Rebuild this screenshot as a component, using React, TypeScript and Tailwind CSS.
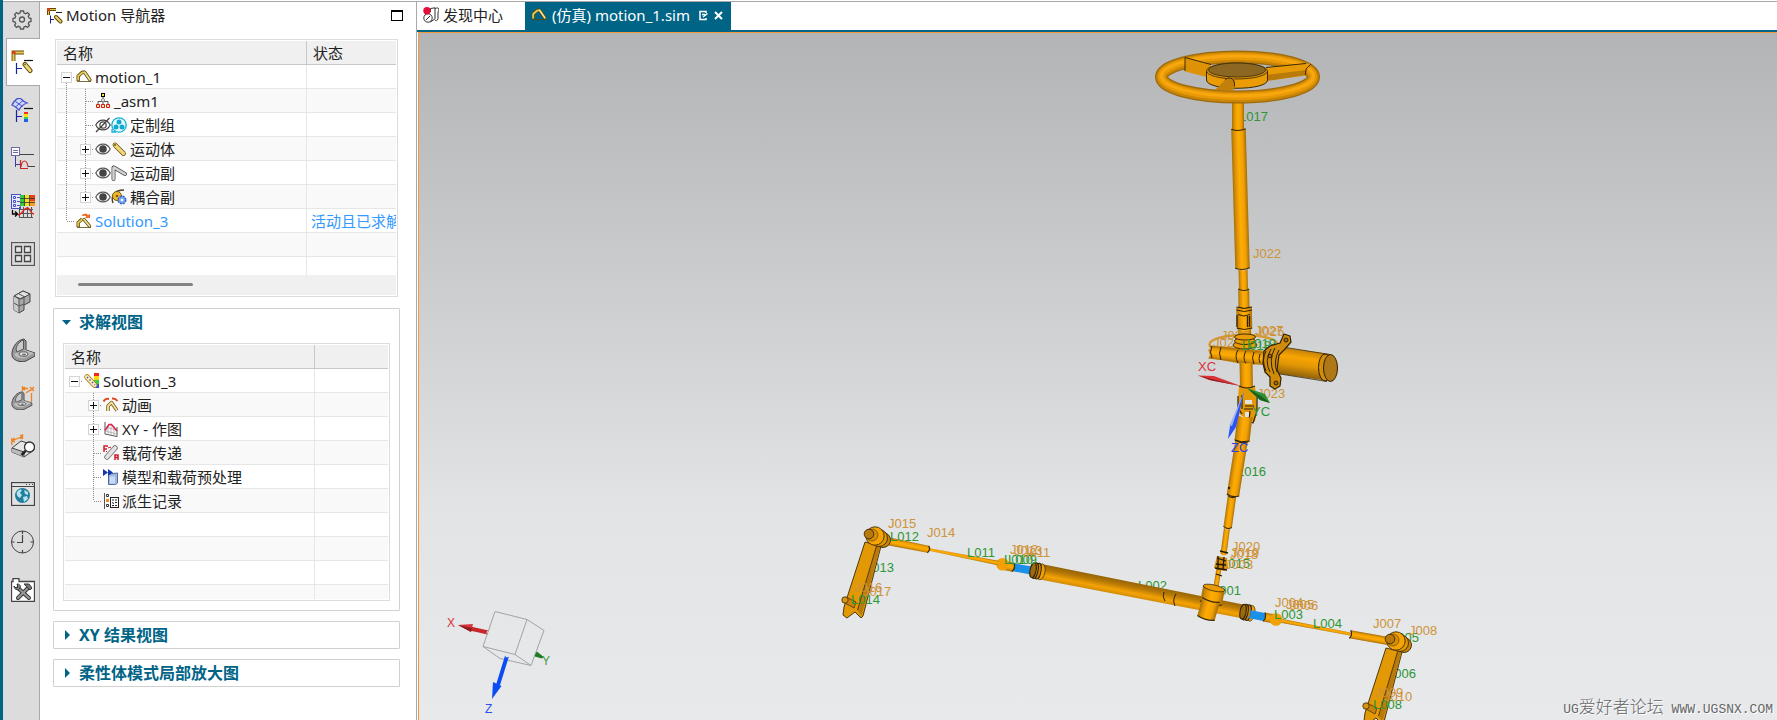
import React, { useState } from 'react';

type Line = 'none' | 'up' | 'down' | 'full';

interface TreeRow {
    name: string;
    lines: Line[];
    box?: '+' | '-';
    icons: React.ReactNode[];
    status?: string;
    active?: boolean;
}

interface TubeProps {
    from: [number, number];
    to: [number, number];
    w: number;
    w2?: number;
    fill?: string;
    caps?: boolean;
}

const Svg: React.FC<{ size?: number; children: React.ReactNode }> = ({ size = 16, children }) => (
    <svg width={size} height={size} viewBox={`0 0 ${size} ${size}`} fill="none" className="block shrink-0" aria-hidden="true">
        {children}
    </svg>
);

/* ---------- small icons, 16px ---------- */

const LinkageIcon = () => (
    <Svg>
        <path d="M1 12.500h14" stroke="#5c4a08" strokeWidth=".8" />
        <path d="M2.200 12V7L6 3.500l3-.5" stroke="#5c4a08" strokeWidth="3.400" strokeLinejoin="round" />
        <path d="M8.800 3.500l5 7.300" stroke="#5c4a08" strokeWidth="3.400" strokeLinecap="round" />
        <path d="M2.200 11.500V7L6 3.700l3-.5" stroke="#e4c95a" strokeWidth="1.800" strokeLinejoin="round" />
        <path d="M8.800 3.500l5 7.300" stroke="#f3e292" strokeWidth="1.800" strokeLinecap="round" />
    </Svg>
);

const SolutionIcon = () => (
    <Svg>
        <path d="M1 14.500h14" stroke="#5c4a08" strokeWidth=".8" />
        <path d="M2.200 14V9.500l4-3.500" stroke="#5c4a08" strokeWidth="3.400" strokeLinejoin="round" />
        <path d="M8 6.500l5.500 6.500" stroke="#5c4a08" strokeWidth="3.400" strokeLinecap="round" />
        <path d="M2.200 13.500V9.500l4-3.300" stroke="#e4c95a" strokeWidth="1.800" strokeLinejoin="round" />
        <path d="M8 6.500l5.500 6.500" stroke="#f3e292" strokeWidth="1.800" strokeLinecap="round" />
        <path d="M6 2c3-2 5-1 6 0l2-1v4H9l1.500-1.500C9 2.500 8 2.500 6 3z" fill="#f26a21" />
    </Svg>
);

const AssemblyIcon = () => (
    <Svg>
        <path d="M8 4v7M3 11V8.500h10V11" stroke="#555" />
        <rect x="6.500" y=".5" width="3" height="3" fill="#ffe94a" stroke="#000" />
        <circle cx="8" cy="7" r="1.500" fill="#fff" stroke="#888" />
        <path d="M1.500 11.500h3v3h-3zM6.500 11.500h3v3h-3zM11.500 11.500h3v3h-3z" fill="#ffe9a0" stroke="#d01818" />
    </Svg>
);

const EyeIcon = () => (
    <Svg>
        <path d="M.8 8C4 1.500 12 1.500 15.200 8 12 14.500 4 14.500.8 8z" fill="#fff" stroke="#555" strokeWidth="1.200" />
        <circle cx="8" cy="8" r="3.800" fill="#444" />
    </Svg>
);

const HiddenEyeIcon = () => (
    <Svg>
        <path d="M.8 8C4 1.500 12 1.500 15.200 8 12 14.500 4 14.500.8 8z" stroke="#444" strokeWidth="1.200" />
        <circle cx="8" cy="8" r="3.200" stroke="#444" strokeWidth="1.200" />
        <path d="M1 15L14.500 1" stroke="#444" strokeWidth="1.300" />
    </Svg>
);

const GroupIcon = () => (
    <Svg>
        <circle cx="8" cy="8" r="7.200" fill="#eafafd" stroke="#12b0d4" strokeWidth="1.300" />
        <circle cx="8" cy="5" r="2.500" fill="#12a9cf" />
        <circle cx="5" cy="10" r="2.500" fill="#12a9cf" />
        <circle cx="11" cy="10" r="2.500" fill="#12a9cf" />
        <path d="M1 12v3h4" stroke="#12b0d4" strokeWidth="1.300" />
    </Svg>
);

const BodyIcon = () => (
    <Svg>
        <path d="M4 4l8.500 8.500" stroke="#6d5610" strokeWidth="4.800" strokeLinecap="round" />
        <path d="M4 4l8.500 8.500" stroke="#f0d878" strokeWidth="3.200" strokeLinecap="round" />
        <circle cx="4" cy="4" r="1" fill="#6d5610" />
    </Svg>
);

const JointIcon = () => (
    <Svg>
        <path d="M2.500 2.500V14M3 2.500l11 6.500" stroke="#555" strokeWidth="4" strokeLinecap="round" />
        <path d="M2.500 3V14M3 2.500l11 6.500" stroke="#d6d6d6" strokeWidth="2.400" strokeLinecap="round" />
    </Svg>
);

const CouplerIcon = () => (
    <Svg>
        <path d="M2 14C-.5 7 3 1 13 1" stroke="#4b4020" strokeWidth="1.400" />
        <circle cx="6" cy="7" r="4.500" fill="#f0b92d" stroke="#7a5a0c" />
        <circle cx="6" cy="7" r="1.300" fill="#7a5a0c" />
        <circle cx="11" cy="11" r="3.800" fill="#7ba7ee" stroke="#2c5fc0" strokeWidth="1.400" strokeDasharray="2 1" />
        <circle cx="11" cy="11" r="1.300" fill="#fff" />
    </Svg>
);

const ResultIcon = () => (
    <Svg>
        <path d="M10 0h5v4h-5z" fill="#f3241c" />
        <path d="M10 3h5v4h-5z" fill="#ffd500" />
        <path d="M10 7h5v4h-5z" fill="#35d04a" />
        <path d="M10 11h5v4h-5z" fill="#2454f0" />
        <path d="M3 4l7.500 8" stroke="#b5841e" strokeWidth="5.500" strokeLinecap="round" />
        <path d="M3 4l7.500 8" stroke="#fdf0c0" strokeWidth="4" strokeLinecap="round" />
        <path d="M3 4l8 8" stroke="#3c49c8" strokeWidth="1.500" strokeDasharray="1.500 2" />
    </Svg>
);

const AnimationIcon = () => (
    <Svg>
        <path d="M5 14V9l3.500-3.500 5.500 8" stroke="#75591a" strokeWidth="3.400" strokeLinejoin="round" />
        <path d="M5 14V9l3.500-3.500 5.500 8" stroke="#f6e19a" strokeWidth="1.800" strokeLinejoin="round" />
        <path d="M.5 4.500C2 1.500 4 1.500 6 2M9 1.500c3-.5 4 .5 5.500 2.500" stroke="#e04b1c" strokeWidth="2" />
    </Svg>
);

const GraphIcon = () => (
    <Svg>
        <path d="M2 1v12l12 2.500V6" stroke="#555" />
        <path d="M5 4v9.500M8 3v11M11 5v9.500M2 6l12 3M2 10l12 3" stroke="#aaa" strokeWidth=".8" />
        <path d="M2 9.500l4-6h2.500L14 10" stroke="#e0204a" strokeWidth="1.600" />
    </Svg>
);

const LoadIcon = () => (
    <Svg>
        <path d="M4 12L12 3" stroke="#777" strokeWidth="5.500" strokeLinecap="round" />
        <path d="M4 12L12 3" stroke="#e2e2e2" strokeWidth="3.800" strokeLinecap="round" />
        <path d="M1 7V1h4M1 4h3M12 15V10h3v5M12 12.500h3" stroke="#d01c2c" strokeWidth="1.500" />
        <path d="M5 3l3-1M3 6l1 1" stroke="#d01c2c" />
    </Svg>
);

const PreprocessIcon = () => (
    <Svg>
        <path d="M5.500 5l9-1v10l-2 1.500h-7z" fill="#9db9e4" stroke="#506b98" />
        <path d="M7 7.500h5v7H7z" fill="#c8daf5" />
        <path d="M0 0l5 3.500L0 7zM5 0l5 3.500L5 7z" fill="#1438a8" />
    </Svg>
);

const RecordIcon = () => (
    <Svg>
        <path d="M1.500 0v16" stroke="#555" />
        <path d="M3.500 1.500h2v2h-2zM3.500 11.500h2v2h-2z" stroke="#333" />
        <path d="M3 6h3v3H3z" fill="#f08a24" />
        <rect x="7.500" y="4.500" width="8" height="10" fill="#fff" stroke="#222" />
        <path d="M9 7h2M12 7h2M9 9.500l2 1M12 9.500h2M9 12.500h2M12 12.500h2" stroke="#222" />
    </Svg>
);

const NavigatorIcon = () => (
    <Svg>
        <path d="M1.500 7V1.500H9" stroke="#5c4a08" strokeWidth="3" />
        <path d="M1.500 7V1.500H9" stroke="#e9bf3b" />
        <path d="M0 0h3v3H0z" fill="#d2401a" />
        <path d="M3.500 7.500v8M4 11.500h3" stroke="#1a22a0" />
        <path d="M9 4.500h6" stroke="#222" />
        <path d="M9 9l4.500 4.500" stroke="#5c4a08" strokeWidth="4" strokeLinecap="round" />
        <path d="M9 9l4.500 4.500" stroke="#ecd069" strokeWidth="2" strokeLinecap="round" />
    </Svg>
);

const DiscoveryIcon = () => (
    <Svg>
        <path d="M7.500 5V1.500L12 .8v11L7.500 15M12 1.500c5-2 4 2 3 3.500v7c-1 2-2 2-3 1" stroke="#333" />
        <circle cx="5" cy="11" r="4.200" fill="#fff" stroke="#333" />
        <path d="M3 13l4-4" stroke="#333" />
        <circle cx="4" cy="3.800" r="3.700" fill="#e2103c" />
    </Svg>
);

/* ---------- resource bar icons, 24px ---------- */

const GearIcon = () => (
    <Svg size={24}>
        <path
            d="M9.500 4h3l.5 2 1.700.7 1.800-1.100 1.900 1.900-1.100 1.800.7 1.700 2 .5v3l-2 .5-.7 1.700 1.100 1.800-1.900 1.900-1.800-1.100-1.700.7-.5 2h-3l-.5-2-1.700-.7-1.800 1.100-1.900-1.900 1.100-1.800-.7-1.700-2-.5v-3l2-.5.7-1.700-1.100-1.800 1.900-1.900 1.800 1.100L9 6z"
            stroke="#555"
            strokeWidth="1.300"
        />
        <circle cx="11" cy="12.500" r="2.500" stroke="#555" strokeWidth="1.300" />
    </Svg>
);

const MotionNavIcon = () => (
    <Svg size={24}>
        <path d="M2.500 11V2.500H13" stroke="#5c4a08" strokeWidth="3.800" />
        <path d="M2.500 11V2.500H13" stroke="#ecc655" strokeWidth="2" />
        <path d="M1 1h3.500v3H1z" fill="#d2401a" />
        <path d="M5.500 13v11M6 18.500h5" stroke="#1a22a0" strokeWidth="1.200" />
        <path d="M13 10.500h9" stroke="#111" strokeWidth="1.200" />
        <path d="M14 14.500l5 6" stroke="#5c4a08" strokeWidth="5" strokeLinecap="round" />
        <path d="M14 14.500l5 6" stroke="#efd67b" strokeWidth="3" strokeLinecap="round" />
        <circle cx="14" cy="14.500" r=".8" fill="#5c4a08" />
    </Svg>
);

const SimNavIcon = () => (
    <Svg size={24}>
        <path d="M1 7C3 3 6 0 9 0c2 2 4 4 7 5-3 1-6 3-8 7-2-2-4-4-7-5z" fill="#cfd6ff" stroke="#4850c8" strokeWidth="1.300" />
        <path d="M4.500 3.500l7 5M12 2.500L4.500 9" stroke="#4850c8" />
        <path d="M5.500 12v12M6 18.500h5" stroke="#1a22a0" strokeWidth="1.200" />
        <path d="M13 10.500h9" stroke="#111" strokeWidth="1.200" />
        <path d="M13 14h4v3h-4z" fill="#f0301c" />
        <path d="M13 16h4v3h-4z" fill="#ffe000" />
        <path d="M13 19h4v2h-4z" fill="#30d050" />
        <path d="M13 21h4v3h-4z" fill="#2060f0" />
    </Svg>
);

const XyNavIcon = () => (
    <Svg size={24}>
        <rect x=".5" y="1.500" width="8" height="8" fill="#fff" stroke="#6a6aa8" />
        <path d="M2 4.500h5M2 6.500h5" stroke="#6a6aa8" />
        <path d="M9 8.500h14M17 20.500h7" stroke="#444" />
        <path d="M4.500 10v11M5 18.500h4" stroke="#3a3aa8" />
        <path d="M9.500 14v8.500H17M10 21c1-8 6-8 7 0" stroke="#c82828" strokeWidth="1.200" />
    </Svg>
);

const ResultNavIcon = () => (
    <Svg size={24}>
        <rect x=".5" y=".5" width="9" height="14" fill="#e8e8ff" stroke="#4850c8" />
        <path d="M2.500 2.500h2v2h-2zM2.500 6.500h2v2h-2zM2.500 10.500h2v2h-2zM6 3.500h3M6 7.500h3M6 11.500h3" stroke="#4850c8" />
        <path d="M9 1h5v11H9z" fill="#38c840" />
        <path d="M14 1h5v11h-5z" fill="#f4e020" />
        <path d="M19 1h5v6h-5z" fill="#e8401c" />
        <path d="M19 7h5v5h-5z" fill="#f5a020" />
        <path d="M9 4.500h15M9 8.500h15M13.500 1v11M18.500 1v11" stroke="#333" strokeWidth=".8" />
        <path d="M8.500 13v11M12.500 13v11M16.500 13v11M20.500 13v11M8 15.500h14M8 19.500h14M8 23.500h14" stroke="#555" />
        <path d="M7 21c5 0 5-7 9-7s3 6 7 6" stroke="#e02020" strokeWidth="1.300" />
        <path d="M1.500 16v4H6M4 17.500L6.500 20 4 22.500" stroke="#000" strokeWidth="1.300" />
    </Svg>
);

const GridIcon = () => (
    <Svg size={24}>
        <rect x=".5" y=".5" width="23" height="23" stroke="#555" strokeWidth="1.300" />
        <path d="M4.500 4.500h6v6h-6zM13.500 4.500h6v6h-6zM4.500 13.500h6v6h-6zM13.500 13.500h6v6h-6z" fill="#e8e8e8" stroke="#444" strokeWidth="1.300" />
    </Svg>
);

const BlocksIcon = () => (
    <Svg size={24}>
        <path d="M3 6l9-5 7 3v8l-6 3v5l-5 3-5-3z" fill="#a8a8a8" stroke="#444" strokeLinejoin="round" />
        <path d="M3 6l9-5 7 3-9 5z" fill="#e2e2e2" stroke="#444" strokeLinejoin="round" />
        <path d="M3 6l5 3v14l-5-3z" fill="#c8c8c8" />
        <path d="M3 6l5 3v14M8 9l5-2v8M3 13l5 3 5-2M8 4l6 3" stroke="#555" />
    </Svg>
);

const BracketShape = () => (
    <>
        <path d="M1 15C2 7 7 2 13 1l2 2v9l9 3v3l-9 5c-6 2-14-1-14-6z" fill="#999" stroke="#444" strokeLinejoin="round" />
        <path d="M5 11c1-5 4-8 7.500-9v9L6 14z" fill="#c9c9c9" stroke="#555" />
        <path d="M3 16l11-4 9 3-9 5c-5 1-9 0-11-4z" fill="#bdbdbd" />
        <ellipse cx="12.500" cy="16" rx="4.500" ry="2.200" fill="#ddd" stroke="#555" />
        <ellipse cx="13" cy="16.500" rx="2" ry="1" fill="#777" />
    </>
);

const PartIcon = () => (
    <Svg size={24}>
        <BracketShape />
    </Svg>
);

const PmiIcon = () => (
    <Svg size={24}>
        <g transform="translate(0 5) scale(.87 .8)">
            <BracketShape />
        </g>
        <path d="M11.500 0v5M11 2.500h6M14 1l-2.500 1.500L14 4M15 7l4-3M19 1l4 4M23 1l-4 4M20.500 7v9" stroke="#f08020" strokeWidth="1.300" />
    </Svg>
);

const InspectIcon = () => (
    <Svg size={24}>
        <path d="M1 14l9-7 13 4v5l-10 7-12-5z" fill="#e6e6e6" stroke="#444" strokeLinejoin="round" />
        <path d="M1 14l12 4v5l-12-5z" fill="#bbb" />
        <path d="M1 14l12 4 10-7M13 18v5" stroke="#444" />
        <circle cx="18.500" cy="13" r="5" fill="#fff" stroke="#333" strokeWidth="1.300" />
        <path d="M14.500 17l-4 4" stroke="#222" strokeWidth="2.500" />
        <path d="M.8 4v7M11.500 0v5M1 7l10-4.500M3.500 4L1 7l3 .8M9 1l2.500 1.500L9.500 5" stroke="#f08020" strokeWidth="1.300" />
    </Svg>
);

const WebIcon = () => (
    <Svg size={24}>
        <rect x=".5" y=".5" width="23" height="23" fill="#e2e2e2" stroke="#444" strokeWidth="1.300" />
        <path d="M1 4.500h22" stroke="#444" />
        <path d="M15 2.500h7" stroke="#444" strokeDasharray="1 2" />
        <circle cx="11.500" cy="13.500" r="7.500" fill="#1f7f9c" />
        <path d="M6 10c2-3 4-3 5-2l-2 3 2 2-2 3c-2-1-4-3-3-6zM13 8l4 2v3l-3-1zM12 15l4-1 1 3-4 3z" fill="#b8e2ee" />
    </Svg>
);

const ClockIcon = () => (
    <Svg size={24}>
        <circle cx="11.500" cy="12" r="11" stroke="#444" />
        <path d="M11.500 1v3M11.500 20v3M.500 12h3M19.500 12h3M11.500 5v7.500H6" stroke="#444" strokeWidth="1.200" />
    </Svg>
);

const ToolsIcon = () => (
    <Svg size={24}>
        <path d="M.5 3.500H2v-3h6v3h15.500v20H.5z" fill="#fff" stroke="#444" strokeWidth="1.300" />
        <path d="M7 10l11 10M17 10L7 20" stroke="#333" strokeWidth="4" strokeLinecap="round" />
        <path d="M7 10l11 10M17 10L7 20" stroke="#999" strokeWidth="2" strokeLinecap="round" />
        <path d="M3 8c0 4 5 5 6 2s-1-4-3-4l1 3-2 1z" fill="#888" stroke="#333" />
        <path d="M13 6h5l3 4-2 2-3-3z" fill="#777" stroke="#333" />
    </Svg>
);

/* ---------- tree tables ---------- */

const motionRows: TreeRow[] = [
    { name: 'motion_1', lines: ['down'], box: '-', icons: [<LinkageIcon />] },
    { name: '_asm1', lines: ['full', 'full'], icons: [<AssemblyIcon />] },
    { name: '定制组', lines: ['full', 'full'], icons: [<HiddenEyeIcon />, <GroupIcon />] },
    { name: '运动体', lines: ['full', 'full'], box: '+', icons: [<EyeIcon />, <BodyIcon />] },
    { name: '运动副', lines: ['full', 'full'], box: '+', icons: [<EyeIcon />, <JointIcon />] },
    { name: '耦合副', lines: ['full', 'up'], box: '+', icons: [<EyeIcon />, <CouplerIcon />] },
    { name: 'Solution_3', lines: ['up'], icons: [<SolutionIcon />], status: '活动且已求解', active: true },
];

const solutionRows: TreeRow[] = [
    { name: 'Solution_3', lines: ['none'], box: '-', icons: [<ResultIcon />] },
    { name: '动画', lines: ['none', 'full'], box: '+', icons: [<AnimationIcon />] },
    { name: 'XY - 作图', lines: ['none', 'full'], box: '+', icons: [<GraphIcon />] },
    { name: '载荷传递', lines: ['none', 'full'], icons: [<LoadIcon />] },
    { name: '模型和载荷预处理', lines: ['none', 'full'], icons: [<PreprocessIcon />] },
    { name: '派生记录', lines: ['none', 'up'], icons: [<RecordIcon />] },
];

const Guide: React.FC<{ line: Line; last: boolean; box?: '+' | '-'; label: string }> = ({ line, last, box, label }) => {
    const y1 = line === 'down' ? 12 : 0;
    const y2 = line === 'up' ? 12 : 24;
    return (
        <span className={`relative h-6 shrink-0 ${last ? 'w-[15px]' : 'w-[19px]'}`}>
            <svg width="19" height="24" className="block" stroke="#8a8a8a" strokeDasharray="1 1" aria-hidden="true">
                {line !== 'none' && <path d={`M5.500 ${y1}V${y2}`} />}
                {last && <path d="M6 12.500H14" />}
            </svg>
            {last && box && (
                <button type="button" aria-label={label} className="absolute left-0 top-[7px] block h-[11px] w-[11px] border border-[#d4d4d4] bg-white">
                    <svg width="9" height="9" className="block" stroke="#111" aria-hidden="true">
                        <path d={box === '+' ? 'M1 4.500h7M4.500 1v7' : 'M1 4.500h7'} />
                    </svg>
                </button>
            )}
        </span>
    );
};

const TreeTable: React.FC<{ rows: TreeRow[]; blanks: number; tail: string; status: string; label: string }> = ({ rows, blanks, tail, status, label }) => {
    const cell = 'overflow-hidden whitespace-nowrap border-[#e6e6e6]';
    return (
        <table aria-label={label} className="w-full table-fixed border-separate border-spacing-0 text-[15px] leading-[21px] text-[#222]">
            <thead>
                <tr className="h-6 bg-[#f0f0f0] text-left">
                    <th className="h-6 w-[250px] border-b border-r border-[#c8c8c8] p-0 pl-1.5 pt-0.5 font-normal">名称</th>
                    <th className="h-6 border-b border-[#c8c8c8] p-0 pl-1.5 pt-0.5 font-normal">{status}</th>
                </tr>
            </thead>
            <tbody>
                {rows.map((row) => (
                    <tr key={row.name} className={`h-6 even:bg-[#f9f9f9] ${row.active ? 'text-[#3399ff]' : ''}`}>
                        <td className={`${cell} border-b border-r p-0`}>
                            <div className="flex h-[23px] items-center overflow-hidden pl-1">
                                {row.lines.map((line, i) => (
                                    <Guide key={i} line={line} last={i === row.lines.length - 1} box={row.box} label={row.name} />
                                ))}
                                {row.icons.map((icon, i) => (
                                    <React.Fragment key={i}>{icon}</React.Fragment>
                                ))}
                                <span className="ml-[3px] pt-0.5">{row.name}</span>
                            </div>
                        </td>
                        <td className={`${cell} border-b p-0 pl-1 pt-0.5`}>{row.status}</td>
                    </tr>
                ))}
                {Array.from({ length: blanks }, (_, i) => (
                    <tr key={i} className="h-6 even:bg-[#f9f9f9]">
                        <td className={`${cell} border-b border-r p-0`} />
                        <td className={`${cell} border-b p-0`} />
                    </tr>
                ))}
                <tr className={`even:bg-[#f9f9f9] ${tail}`}>
                    <td className={`${cell} border-r p-0`} />
                    <td className={`${cell} p-0`} />
                </tr>
            </tbody>
        </table>
    );
};

const Section: React.FC<{ title: string; defaultOpen?: boolean; children?: React.ReactNode }> = ({ title, defaultOpen = false, children }) => {
    const [open, setOpen] = useState(defaultOpen);
    const expanded = open && !!children;
    return (
        <section className="rounded-[1px] border border-[#d0d0d0]">
            <h2>
                <button
                    type="button"
                    aria-expanded={expanded}
                    onClick={() => setOpen(!open)}
                    className={`flex w-full items-center gap-2 pl-2 text-base leading-[26px] font-bold text-[#006487] ${expanded ? 'pb-2' : ''}`}
                >
                    <svg width="9" height="10" fill="#006487" aria-hidden="true">
                        <path d={expanded ? 'M0 3h9L4.500 8z' : 'M3 0v10l5-5z'} />
                    </svg>
                    {title}
                </button>
            </h2>
            {expanded && <div className="px-[9px] pb-[9px]">{children}</div>}
        </section>
    );
};

/* ---------- 3D view ---------- */

const Tube: React.FC<TubeProps> = ({ from, to, w, w2 = w, fill = 'url(#metal)', caps = false }) => {
    const dx = to[0] - from[0];
    const dy = to[1] - from[1];
    const len = Math.hypot(dx, dy);
    const angle = (Math.atan2(dy, dx) * 180) / Math.PI;
    return (
        <g transform={`translate(${from[0]} ${from[1]}) rotate(${angle})`}>
            <path d={`M0 ${-w / 2}L${len} ${-w2 / 2}Q${len + 3} 0 ${len} ${w2 / 2}L0 ${w / 2}Q3 0 0 ${-w / 2}z`} fill={fill} />
            {caps && (
                <path
                    d={`M0 ${-w / 2}Q3 0 0 ${w / 2}M${len} ${-w2 / 2}Q${len + 3} 0 ${len} ${w2 / 2}`}
                    fill="none"
                    stroke="#3b2a08"
                    strokeWidth="1.200"
                />
            )}
        </g>
    );
};

const Labels: React.FC<{ items: [string, number, number][]; color: string }> = ({ items, color }) => (
    <g fill={color} fontSize="13" fontFamily='"Liberation Sans", Arial, sans-serif'>
        {items.map(([text, x, y]) => (
            <text key={text} x={x} y={y}>{text}</text>
        ))}
    </g>
);

const Knuckle: React.FC<{ x: number; y: number }> = ({ x, y }) => (
    <g stroke="#3b2a08" strokeWidth=".9">
        <circle cx={x + 8} cy={y + 4} r="7.500" fill="#c98407" />
        <circle cx={x + 4} cy={y + 2} r="8.500" fill="#e39806" />
        <circle cx={x} cy={y} r="9.200" fill="#f5a404" />
        <circle cx={x - 3} cy={y - 1} r="6" fill="#d68d06" strokeWidth=".5" />
        <circle cx={x - 6} cy={y - 2} r="4.800" fill="#b97908" />
    </g>
);

const Arm: React.FC<{ x: number; y: number }> = ({ x, y }) => (
    <g transform={`translate(${x} ${y})`} strokeLinejoin="round">
        <path d="M-10 7L6 11-12 81l-2 2-6-6-8 6-4-3 1-8z" fill="#e39806" stroke="#3b2a08" strokeWidth=".9" />
        <path d="M5.500 11.500l-4-1-19 65 4 5z" fill="#b97c0c" />
        <path d="M1.500 11l-19 64" stroke="#3b2a08" strokeWidth=".8" />
        <path d="M-29 62l10 5-2 6-11-6z" fill="#c98407" stroke="#3b2a08" strokeWidth=".7" />
        <circle cx="-30" cy="65" r="3.200" fill="#d9930c" stroke="#3b2a08" strokeWidth=".8" />
    </g>
);

const Boot: React.FC<{ x: number; y: number }> = ({ x, y }) => (
    <g transform={`translate(${x} ${y}) rotate(11)`} stroke="#2e2106">
        <ellipse cx="4" rx="4" ry="8" fill="#f0a006" strokeWidth=".6" />
        <ellipse cx="1" rx="3" ry="8" fill="#c98407" />
        <ellipse cx="-2" rx="3" ry="8" fill="#c98407" />
        <ellipse cx="-4" rx="3" ry="7.500" fill="#9b6a0e" />
    </g>
);

const Viewport = () => (
    <svg viewBox="419 33 1358 687" preserveAspectRatio="xMidYMid slice" className="absolute inset-0 block h-full w-full" role="img" aria-label="motion_1.sim">
        <defs>
            <linearGradient id="metal" x1="0" y1="0" x2="0" y2="1">
                <stop offset="0" stopColor="#a56d06" />
                <stop offset=".25" stopColor="#f0a004" />
                <stop offset=".55" stopColor="#ffac02" />
                <stop offset=".8" stopColor="#dc9206" />
                <stop offset="1" stopColor="#a87008" />
            </linearGradient>
            <linearGradient id="rack" x1="0" y1="0" x2="0" y2="1">
                <stop offset="0" stopColor="#946206" />
                <stop offset=".35" stopColor="#b97a06" />
                <stop offset=".7" stopColor="#f5a303" />
                <stop offset="1" stopColor="#ce8a08" />
            </linearGradient>
            <linearGradient id="motor" x1="0" y1="0" x2="0" y2="1">
                <stop offset="0" stopColor="#c58207" />
                <stop offset=".3" stopColor="#f8a503" />
                <stop offset=".6" stopColor="#df9505" />
                <stop offset="1" stopColor="#8f610c" />
            </linearGradient>
        </defs>

        {/* labels behind the parts */}
        <Labels
            color="#2e9636"
            items={[
                ['L017', 1239, 121],
                ['L016', 1237, 476],
                ['L002', 1138, 590],
                ['L015', 1221, 568],
                ['L001', 1212, 595],
                ['L013', 865, 572],
                ['L005', 1390, 642],
                ['L006', 1387, 678],
            ]}
        />
        <Labels color="#cf9338" items={[['J023', 1257, 398], ['J027', 1255, 335], ['J025', 1256, 336]]} />

        {/* steering wheel */}
        <Tube from={[1238, 100]} to={[1238, 130]} w={12} caps />
        <ellipse cx="1237.500" cy="77" rx="76" ry="20" fill="none" stroke="#9c690c" strokeWidth="13" />
        <ellipse cx="1237.500" cy="77" rx="76" ry="20" fill="none" stroke="#c98507" strokeWidth="10.500" />
        <ellipse cx="1237.500" cy="76.500" rx="76" ry="20" fill="none" stroke="#e89a06" strokeWidth="7" />
        <ellipse cx="1237.500" cy="76" rx="76" ry="20" fill="none" stroke="#f8a70e" strokeWidth="3" />
        <path d="M1185 57.500l26 7-2 13-24-6z" fill="#dd9305" />
        <path d="M1185 71V57.500l26 7" fill="none" stroke="#3b2a08" />
        <path d="M1266 67.500l44-4-4 12-40 5.500z" fill="#e89a05" />
        <path d="M1266 75l41-5-1 5-40 6z" fill="#b87a08" />
        <path d="M1266 67.500l40-4M1311 64l-5 5-.5 6" fill="none" stroke="#3b2a08" />
        <path d="M1206.500 71v9c0 11 61 11 61 0v-9z" fill="#eb9c05" stroke="#3b2a08" />
        <ellipse cx="1237" cy="71" rx="30.500" ry="8" fill="#d58e08" stroke="#3b2a08" strokeWidth=".8" />
        <ellipse cx="1237" cy="70" rx="28.500" ry="7" fill="#8c6722" stroke="#3b2a08" strokeWidth=".8" />
        <path d="M1215 90l11-11c5-4 10 0 9 4l-2 8z" fill="#c2800a" />
        <path d="M1225 79.500c6-4 10 0 9.500 7" fill="none" stroke="#3b2a08" />

        {/* upper column */}
        <Tube from={[1238.500, 129]} to={[1242.500, 268]} w={14.500} caps />
        <Tube from={[1243, 269]} to={[1243.500, 289]} w={9} />
        <Tube from={[1243.700, 289]} to={[1244, 307]} w={11} caps />
        <Tube from={[1244, 307]} to={[1244.500, 329]} w={15.500} />
        <path d="M1236.500 307q8 3 15.500 0M1236.500 310q8 3 15.500 0M1237 328q7 3 15 0" fill="none" stroke="#2e2106" />
        <path d="M1237 315v12M1247.500 316v11M1249.500 316v11" stroke="#2e2106" strokeWidth="1.300" />
        <path d="M1238 314.500q6 3 12 0" fill="none" stroke="#2e2106" />
        <Tube from={[1244.500, 329]} to={[1245, 345]} w={13} />

        {/* gearbox */}
        <path d="M1209 352c3-7 12-6 20-5l38 4 10 3v9l-30 2-36-7z" fill="#c98409" />
        <ellipse cx="1243.500" cy="344.500" rx="34" ry="9.500" fill="none" stroke="#d59a35" strokeWidth="2.500" />
        <path d="M1210 349c4 8 40 13 68 3" fill="none" stroke="#d08f1e" strokeWidth="5" />
        <Labels color="#cf9338" items={[['J026', 1221, 340], ['J024', 1213, 347]]} />
        <g stroke="#2e2106" strokeWidth=".9" fill="#eb9c05">
            <ellipse cx="1245" cy="345" rx="12" ry="4" />
            <ellipse cx="1245" cy="341" rx="10.500" ry="3.500" />
            <ellipse cx="1245" cy="337" rx="10.500" ry="3" />
        </g>
        <Tube from={[1209, 352]} to={[1268, 359]} w={13} />
        <path d="M1212 346q-3 6 0 12M1221 347q-3 6 0 13M1238 350q-4 6 0 13M1246 351q-4 6 0 13M1254 352q-3 6 0 12M1260 354q-2 5 0 9" fill="none" stroke="#2e2106" />
        <Labels color="#2e9636" items={[['L018', 1242, 350], ['L019', 1247, 348]]} />
        <Tube from={[1246, 362]} to={[1246.500, 388]} w={13} />

        {/* motor */}
        <Tube from={[1277, 360]} to={[1329, 367.500]} w={27} fill="url(#motor)" />
        <path d="M1279 346.500l51 8M1277 373.500l50 8" stroke="#3b2a08" strokeWidth=".8" />
        <ellipse cx="1325" cy="367.500" rx="6.500" ry="13.500" fill="#d48d08" stroke="#2e2106" />
        <ellipse cx="1330.500" cy="368" rx="7" ry="13.500" fill="#ae7816" stroke="#2e2106" />
        <path
            d="M1284 334l6 2 1 6-6 7-6 6-2 15 4 8-1 8-5 3-5-3v-9l-5-5-2-9 1-12 6-5 10-3z"
            fill="#d18b0a"
            stroke="#2e2106"
            strokeWidth="1.200"
            strokeLinejoin="round"
        />
        <g fill="none" stroke="#2e2106">
            <path d="M1271 349q-7 12-1 23M1275 348q-7 12-1 26M1279 350q-6 11-2 22M1266 351q-5 9 0 20" />
            <circle cx="1286" cy="340" r="2" fill="#a56d06" />
            <circle cx="1276" cy="383" r="2" fill="#a56d06" />
            <circle cx="1270" cy="356" r="1.800" fill="#a56d06" />
        </g>

        {/* upper universal joint */}
        <path d="M1239 386q8 4 16 0l1 10 1 12-2 14-6-2-10-6-1-16z" fill="#e39806" />
        <path d="M1245 400h7v4h-7zM1245 412h4v5h-4z" fill="#e2e3e6" />
        <path
            d="M1239 386q8 4 16 0M1238 396v12l4 6M1242 395v14M1257 397v14l-4 12-4-2 1-10M1245 406h9M1244 409h9"
            fill="none"
            stroke="#2e2106"
            strokeWidth="1.200"
        />

        {/* intermediate shaft */}
        <Tube from={[1245, 416]} to={[1242, 441]} w={15} />
        <Tube from={[1241.500, 441]} to={[1233, 495]} w={12.500} caps />
        <Tube from={[1232, 496]} to={[1227.700, 527]} w={8.500} caps />
        <Tube from={[1227, 528]} to={[1223.500, 554]} w={6} />
        <path d="M1234.500 440q7 3 15 1" fill="none" stroke="#2e2106" />
        <circle cx="1229" cy="488" r="1.200" fill="#2e2106" />

        {/* coordinate system */}
        <path d="M1198 375.500l16 .5 27 10-32-6z" fill="#d8343a" />
        <path d="M1198 375.500l14 5 28 5.500-32-8z" fill="#8f1d22" />
        <path d="M1247 388l18 6 5 9-10-3z" fill="#2f8f35" />
        <path d="M1247 388l13 12 10 3-9-7z" fill="#17611c" />
        <path d="M1244 392l-12 33 4 2z" fill="#6f8cf5" />
        <path d="M1244 392l-14 34-2 13 8-12z" fill="#2b55f0" />
        <path d="M1244 392l-14 32-1 1 3 1z" fill="#9fb2f5" />
        <g fontSize="13" fontFamily='"Liberation Sans", Arial, sans-serif'>
            <text x="1198" y="371" fill="#d8343a">XC</text>
            <text x="1252" y="416" fill="#2e9636">YC</text>
            <text x="1231" y="452" fill="#2a3cf0">ZC</text>
        </g>

        {/* lower joint */}
        <Tube from={[1219, 568]} to={[1215.500, 590]} w={5} caps />
        <path d="M1217 556l10 2 1 10-4 3-10-3z" fill="#d18b0a" />
        <path d="M1217 558l9 3M1216 564l10 1M1215 568l12 2M1218 556v12M1224 557l-1 13M1220 551l8 2M1216 574l6 2" fill="none" stroke="#1f1604" strokeWidth="1.300" />

        {/* steering rack */}
        <Tube from={[1040, 571.700]} to={[1243, 611.500]} w={15.500} w2={14} fill="url(#rack)" />
        <path d="M1164 592q-2 5 1 9M1176 594q-4 6-1 12" fill="none" stroke="#2e2106" />
        <Tube from={[1214, 588]} to={[1211, 603]} w={22} caps />
        <ellipse cx="1214" cy="588" rx="11" ry="3" fill="#eb9c05" stroke="#2e2106" strokeWidth=".7" transform="rotate(13 1214 588)" />
        <Tube from={[1211, 600]} to={[1206, 618]} w={18} caps />

        {/* left tie rod */}
        <Tube from={[1012, 567]} to={[1034, 571]} w={8} fill="#1a90ea" />
        <Tube from={[1005, 565.500]} to={[1013, 567.300]} w={9} caps />
        <Boot x={1037} y={571} />
        <circle cx="1002.500" cy="564.300" r="6.300" fill="#f2a006" />
        <Tube from={[928, 549.300]} to={[998, 563]} w={2.500} w2={4.500} />
        <Tube from={[884, 540.500]} to={[928, 549.300]} w={8} w2={7} caps />
        <Arm x={875} y={535} />
        <Knuckle x={875} y={536} />

        {/* right tie rod */}
        <Boot x={1247} y={612.500} />
        <Tube from={[1249, 614]} to={[1264, 617]} w={8} fill="#1a90ea" />
        <Tube from={[1264, 617]} to={[1272, 618.500]} w={9} caps />
        <circle cx="1276" cy="619.500" r="6.300" fill="#f2a006" />
        <Tube from={[1281, 620.700]} to={[1350, 634]} w={4} w2={3} />
        <Tube from={[1350, 634.300]} to={[1388, 641]} w={8} caps />
        <Arm x={1396} y={641} />
        <Knuckle x={1396} y={641} />

        {/* labels in front */}
        <Labels
            color="#2e9636"
            items={[
                ['L012', 890, 541],
                ['L011', 967, 557],
                ['L010', 1004, 564],
                ['L009', 1008, 564],
                ['L014', 851, 604],
                ['L003', 1274, 619],
                ['L004', 1313, 628],
                ['L008', 1373, 709],
            ]}
        />
        <Labels
            color="#cf9338"
            items={[
                ['J022', 1253, 258],
                ['J015', 888, 528],
                ['J014', 927, 537],
                ['J012', 1010, 554],
                ['J013', 1014, 555],
                ['J011', 1023, 557],
                ['J016', 854, 592],
                ['J017', 863, 596],
                ['J020', 1232, 551],
                ['J019', 1231, 557],
                ['J018', 1230, 559],
                ['J003', 1225, 569],
                ['J004', 1275, 607],
                ['J005', 1286, 609],
                ['J006', 1290, 610],
                ['J007', 1373, 628],
                ['J008', 1409, 635],
                ['J009', 1375, 697],
                ['J010', 1384, 701],
            ]}
        />

        {/* view triad */}
        <path d="M495 611.500l32 8 17 11-13 35-31-7-17-12zM483 646.500l32 8 12-35M515 654.500l16 11" fill="none" stroke="#a3a3a3" />
        <Tube from={[488, 632.500]} to={[470, 628.500]} w={4} fill="#c8282c" />
        <path d="M458 625l15-1-2 8z" fill="#d8343a" />
        <path d="M458 625l13 7 1-4z" fill="#8f1d22" />
        <Tube from={[507, 656]} to={[498, 685]} w={4} fill="#0b4cf5" />
        <path d="M493 682l8.500 4-9.500 13z" fill="#0b4cf5" />
        <path d="M535 656l2-4 6 5-1 1z" fill="#1d7a22" stroke="#1d7a22" />
        <g fontSize="12" fontFamily='"Liberation Sans", Arial, sans-serif'>
            <text x="447" y="627" fill="#d8343a">X</text>
            <text x="542" y="665" fill="#3f9a45">Y</text>
            <text x="485" y="713" fill="#2a50f0">Z</text>
        </g>
    </svg>
);

/* ---------- page ---------- */

const tools = [
    { label: 'Motion 导航器', icon: <MotionNavIcon />, active: true },
    { label: '仿真导航器', icon: <SimNavIcon /> },
    { label: 'XY 函数导航器', icon: <XyNavIcon /> },
    { label: '后处理导航器', icon: <ResultNavIcon /> },
    { label: '视图', icon: <GridIcon /> },
    { label: '装配导航器', icon: <BlocksIcon /> },
    { label: '部件导航器', icon: <PartIcon /> },
    { label: 'PMI', icon: <PmiIcon /> },
    { label: '检查', icon: <InspectIcon /> },
    { label: '浏览器', icon: <WebIcon /> },
    { label: '历史记录', icon: <ClockIcon /> },
    { label: '工具', icon: <ToolsIcon /> },
];

const App: React.FC = () => {
    return (
        <div className='flex h-screen overflow-hidden border-l-[3px] border-[#006487] bg-white pt-px font-["Noto_Sans","Noto_Sans_CJK_SC",sans-serif] text-[15px] text-[#222]'>
            <nav className="flex w-[37px] shrink-0 flex-col border-r border-t border-[#a9a9a9] bg-[#dcdcdc]">
                <button type="button" aria-label="设置" className="flex h-9 shrink-0 items-center justify-end pb-0.5 pr-1">
                    <GearIcon />
                </button>
                {tools.map((tool) => (
                    <button
                        key={tool.label}
                        type="button"
                        aria-label={tool.label}
                        className={`flex h-12 shrink-0 items-center justify-end ${
                            tool.active ? '-mr-px ml-[3px] border-y border-l border-[#a9a9a9] bg-white pr-[5px]' : 'pr-1'
                        }`}
                    >
                        {tool.icon}
                    </button>
                ))}
            </nav>

            <aside className="w-[377px] shrink-0 border-r border-t border-[#a9a9a9] pl-[13px] pr-4">
                <header className="-ml-1.5 flex h-[37px] items-center pb-3 pt-0.5">
                    <NavigatorIcon />
                    <h1 className="ml-[3px] flex-1 leading-[23px]">Motion 导航器</h1>
                    <button type="button" aria-label="最大化" className="-mr-[3px] h-[11px] w-3 border border-t-2 border-black" />
                </header>

                <div className="mx-0.5 border border-[#dcdcdc] p-px">
                    <TreeTable rows={motionRows} blanks={1} tail="h-[18px]" status="状态" label="Motion 导航器" />
                    <div className="h-5 bg-[#f0f0f0] pl-[21px] pt-2">
                        <div className="h-[3px] w-[115px] rounded-full bg-[#838383]" />
                    </div>
                </div>

                <div className="mt-[11px] flex flex-col gap-2.5">
                    <Section title="求解视图" defaultOpen>
                        <div className="border border-[#dcdcdc] p-px">
                            <TreeTable rows={solutionRows} blanks={3} tail="h-[14px]" status="" label="求解视图" />
                        </div>
                    </Section>
                    <Section title="XY 结果视图" />
                    <Section title="柔性体模式局部放大图" />
                </div>
            </aside>

            <main className="flex min-w-0 flex-1 flex-col border-t border-[#a9a9a9]">
                <div className="flex h-[30px] border-b-2 border-[#006487]">
                    <a href="#discovery" className="flex w-[108px] items-center gap-1 pb-0.5 pl-1.5">
                        <DiscoveryIcon />
                        发现中心
                    </a>
                    <div className="flex items-center bg-[#006487] pb-0.5 pl-1.5 pr-[7px] text-white">
                        <a href="#motion_1" className="flex items-center gap-[5px]">
                            <LinkageIcon />
                            (仿真) motion_1.sim
                        </a>
                        <svg width="11" height="11" fill="none" stroke="#fff" className="ml-2" aria-hidden="true">
                            <path d="M8 3V1.500H2v8h6V8" strokeWidth="1.500" />
                            <path d="M4 4.500h3M5 7l4.500-3.500" strokeWidth="1.500" />
                        </svg>
                        <button type="button" aria-label="关闭" className="ml-1 p-px">
                            <svg width="9" height="9" stroke="#fff" strokeWidth="2" className="block" aria-hidden="true">
                                <path d="M1 1l7 7M8 1L1 8" />
                            </svg>
                        </button>
                    </div>
                </div>
                <div className="relative ml-px flex-1 overflow-hidden border-l border-t border-[#f59a3c] bg-linear-to-b from-[#b3b4b6] via-[#e2e4e6] via-70% to-[#e7e9eb]">
                    <Viewport />
                    <p className='absolute bottom-0 right-1 whitespace-pre font-["Liberation_Mono","Noto_Sans_CJK_SC",monospace] text-[13px] leading-5 text-[#666] [text-shadow:1px_1px_0_#fff]'>
                        UG<span className="text-[17px] leading-5 font-light">爱好者论坛</span> WWW.UGSNX.COM
                    </p>
                </div>
            </main>
        </div>
    );
};

export default App;
